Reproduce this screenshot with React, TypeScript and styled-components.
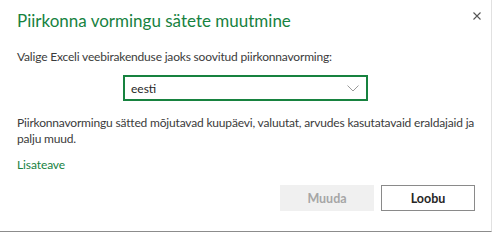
import React from "react";
import styled, { createGlobalStyle } from "styled-components";

const Global = createGlobalStyle`
  html, body { margin: 0; padding: 0; background: #ffffff; }
  * { box-sizing: border-box; }
`;

const Dialog = styled.div`
  width: 492px;
  height: 232px;
  background: #ffffff;
  border-right: 1px solid #e1e1e1;
  border-bottom: 1px solid #8c8c8c;
  font-family: Lato, "Open Sans", sans-serif;
  color: #333333;
  padding: 8px 12px 0 17px;
  display: flex;
  flex-direction: column;
`;

const Header = styled.div`
  display: flex;
  justify-content: space-between;
  align-items: flex-start;
`;

const Title = styled.h1`
  margin: 0;
  font-size: 17px;
  line-height: 26px;
  font-weight: 400;
  color: #17823f;
`;

const CloseButton = styled.button`
  border: none;
  background: transparent;
  padding: 0;
  margin: 0 -6px 0 0;
  width: 16px;
  height: 16px;
  display: flex;
  align-items: center;
  justify-content: center;
  cursor: pointer;
`;

const Text = styled.p<{ $top: number }>`
  margin: ${(p) => p.$top}px 0 0 0;
  font-size: 12px;
  letter-spacing: -0.18px;
  line-height: 16px;
  color: #3b3b3b;
`;

const SelectRow = styled.div`
  display: flex;
  padding-left: 106px;
  margin-top: 10px;
`;

const Select = styled.div`
  width: 245px;
  height: 26px;
  border: 2px solid #17823f;
  display: flex;
  align-items: center;
  justify-content: space-between;
  padding: 0 7px 0 6px;
  font-size: 12px;
  color: #262626;
`;

const Link = styled.a`
  margin-top: 10px;
  font-size: 12px;
  letter-spacing: -0.1px;
  line-height: 16px;
  color: #17823f;
  text-decoration: none;
  align-self: flex-start;
`;

const Footer = styled.div`
  display: flex;
  justify-content: flex-end;
  gap: 7px;
  margin-top: 12px;
  padding-right: 4px;
`;

const Button = styled.button<{ $disabled?: boolean }>`
  width: 94px;
  height: 26px;
  font-family: Lato, "Open Sans", sans-serif;
  font-size: 12.5px;
  font-weight: 700;
  border: 1px solid ${(p) => (p.$disabled ? "#f0f0f0" : "#8a8a8a")};
  background: ${(p) => (p.$disabled ? "#f0f0f0" : "#ffffff")};
  color: ${(p) => (p.$disabled ? "#a6a6a6" : "#262626")};
  padding: 0;
  border-radius: 0;
`;

export default function App() {
  return (
    <>
      <Global />
      <Dialog>
        <Header>
          <Title>Piirkonna vormingu sätete muutmine</Title>
          <CloseButton aria-label="Sulge">
            <svg width="8" height="8" viewBox="0 0 8 8">
              <path d="M0.5 0.5L7.5 7.5M7.5 0.5L0.5 7.5" stroke="#555" strokeWidth="1.1" />
            </svg>
          </CloseButton>
        </Header>
        <Text $top={15}>Valige Exceli veebirakenduse jaoks soovitud piirkonnavorming:</Text>
        <SelectRow>
          <Select>
            <span>eesti</span>
            <svg width="12" height="7" viewBox="0 0 12 7">
              <path d="M0.5 0.5L6 6L11.5 0.5" fill="none" stroke="#9a9a9a" strokeWidth="1" />
            </svg>
          </Select>
        </SelectRow>
        <Text $top={14}>
          Piirkonnavormingu sätted mõjutavad kuupäevi, valuutat, arvudes kasutatavaid eraldajaid ja palju muud.
        </Text>
        <Link href="#">Lisateave</Link>
        <Footer>
          <Button $disabled>Muuda</Button>
          <Button>Loobu</Button>
        </Footer>
      </Dialog>
    </>
  );
}
